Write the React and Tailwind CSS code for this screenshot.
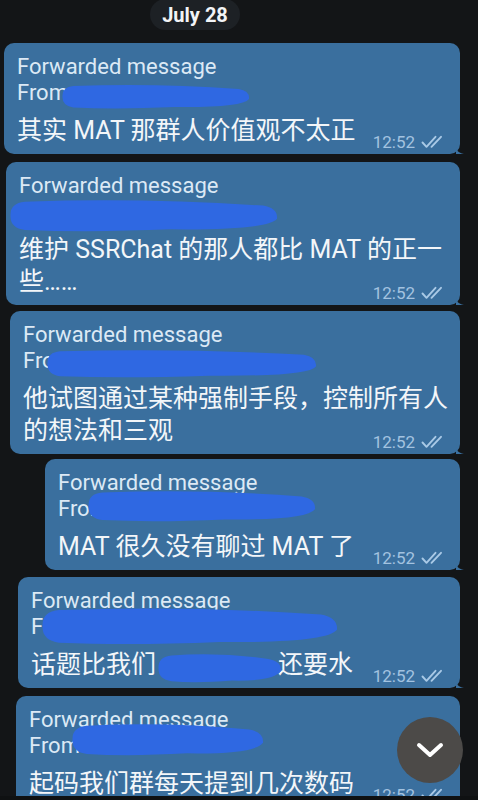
import React from 'react';

const font = { fontFamily: 'Roboto, "Noto Sans CJK SC", sans-serif' };

function Checks() {
  return (
    <svg width="25" height="14" viewBox="0 0 25 14" fill="none" stroke="#a9c9e6" strokeWidth="1.9" strokeLinecap="round" strokeLinejoin="round">
      <path d="M1.5 7.5 L5.5 11.8 L14.5 1.8" />
      <path d="M10.5 11.8 L20 1.8" />
    </svg>
  );
}

// blue marker strokes drawn over the names
function Scribble({ className, w, h }) {
  const d = [
    `M${h * 0.45} ${h * 0.08}`,
    `Q${w * 0.5} ${-h * 0.04} ${w - h * 0.45} ${h * 0.2}`,
    `Q${w} ${h * 0.28} ${w - 1} ${h * 0.6}`,
    `Q${w - h * 0.3} ${h * 0.95} ${w * 0.6} ${h * 0.92}`,
    `Q${w * 0.3} ${h * 1.02} ${h * 0.45} ${h * 0.94}`,
    `Q0 ${h * 0.88} 0.5 ${h * 0.5}`,
    `Q0 ${h * 0.12} ${h * 0.45} ${h * 0.08} Z`,
  ].join(' ');
  return (
    <svg className={`absolute ${className}`} width={w} height={h} viewBox={`0 0 ${w} ${h}`}>
      <path d={d} fill="#2f68e2" />
    </svg>
  );
}

function Time() {
  return (
    <div className="flex items-center gap-[6px] shrink-0 ml-3 translate-y-[5px] text-[17px] leading-[20px] text-[#a3c3e0]">
      <span>12:52</span>
      <Checks />
    </div>
  );
}

function Bubble({ margin, lines, scribbles, from = 'From' }) {
  const last = lines[lines.length - 1];
  const rest = lines.slice(0, -1);
  return (
    <div className={`relative ${margin} mr-[18px] rounded-[10px] bg-[#3a6f9e] pl-[13px] pr-[14px] pt-[11px] pb-[7px]`}>
      <div className="text-[22px] leading-[26px] text-[#dce9f5]">Forwarded message</div>
      <div className="text-[22px] leading-[26px] text-[#dce9f5]">{from}</div>
      <div className="mt-[9px] text-[25px] leading-[32px] text-[#f3f6f9] whitespace-nowrap">
        {rest.map((l, i) => (
          <div key={i}>{l}</div>
        ))}
        <div className="flex items-end justify-between">
          <div>{last}</div>
          <Time />
        </div>
      </div>
      {scribbles}
      <svg className="absolute -right-[4px] bottom-0" width="8" height="10" viewBox="0 0 8 10">
        <path d="M0 0 C0 6 2 9 8 10 L0 10 Z" fill="#3a6f9e" />
      </svg>
    </div>
  );
}

export default function App() {
  return (
    <div className="relative h-[800px] w-full overflow-hidden bg-[#0f1112]" style={font}>
      <div className="h-[796px] overflow-hidden bg-[#131517]">
        <div className="flex justify-center">
          <div className="mr-[88px] rounded-[16px] bg-[#1d2125] px-[12px] pt-[1px] h-[31px] -mt-[1px] text-[20px] leading-[30px] font-bold text-[#f2f4f6]">
            July 28
          </div>
        </div>

        <div className="mt-[13px] flex flex-col">
          <Bubble
            margin="ml-[4px]"
            lines={['其实 MAT 那群人价值观不太正']}
            scribbles={<Scribble className="left-[58px] top-[41px]" w={188} h={25} />}
          />
          <div className="mt-[8px]">
            <Bubble
              margin="ml-[6px]"
              lines={['维护 SSRChat 的那人都比 MAT 的正一', '些……']}
              scribbles={<Scribble className="left-[4px] top-[37px]" w={268} h={33} />}
            />
          </div>
          <div className="mt-[6px]">
            <Bubble
              margin="ml-[10px]"
              lines={['他试图通过某种强制手段，控制所有人', '的想法和三观']}
              scribbles={<Scribble className="left-[37px] top-[38px]" w={270} h={29} />}
            />
          </div>
          <div className="mt-[5px]">
            <Bubble
              margin="ml-[45px]"
              lines={['MAT 很久没有聊过 MAT 了']}
              scribbles={<Scribble className="left-[43px] top-[31px]" w={228} h={32} />}
            />
          </div>
          <div className="mt-[7px]">
            <Bubble
              margin="ml-[18px]"
              lines={[
                <span key="a">
                  话题比我们<span className="inline-block w-[122px]"></span>还要水
                </span>,
              ]}
              scribbles={
                <>
                  <Scribble className="left-[24px] top-[30px]" w={296} h={38} />
                  <Scribble className="left-[140px] top-[76px]" w={124} h={30} />
                </>
              }
            />
          </div>
          <div className="mt-[8px]">
            <Bubble
              margin="ml-[16px]"
              lines={['起码我们群每天提到几次数码']}
              scribbles={<Scribble className="left-[56px] top-[27px]" w={192} h={33} />}
            />
          </div>
        </div>
      </div>

      <button className="absolute left-[397px] top-[717px] flex h-[66px] w-[66px] items-center justify-center rounded-full bg-[#4c4a48]">
        <svg width="28" height="16" viewBox="0 0 28 16" fill="none" stroke="#ffffff" strokeWidth="4" strokeLinecap="round" strokeLinejoin="round">
          <path d="M3 3 L14 13 L25 3" />
        </svg>
      </button>
    </div>
  );
}
